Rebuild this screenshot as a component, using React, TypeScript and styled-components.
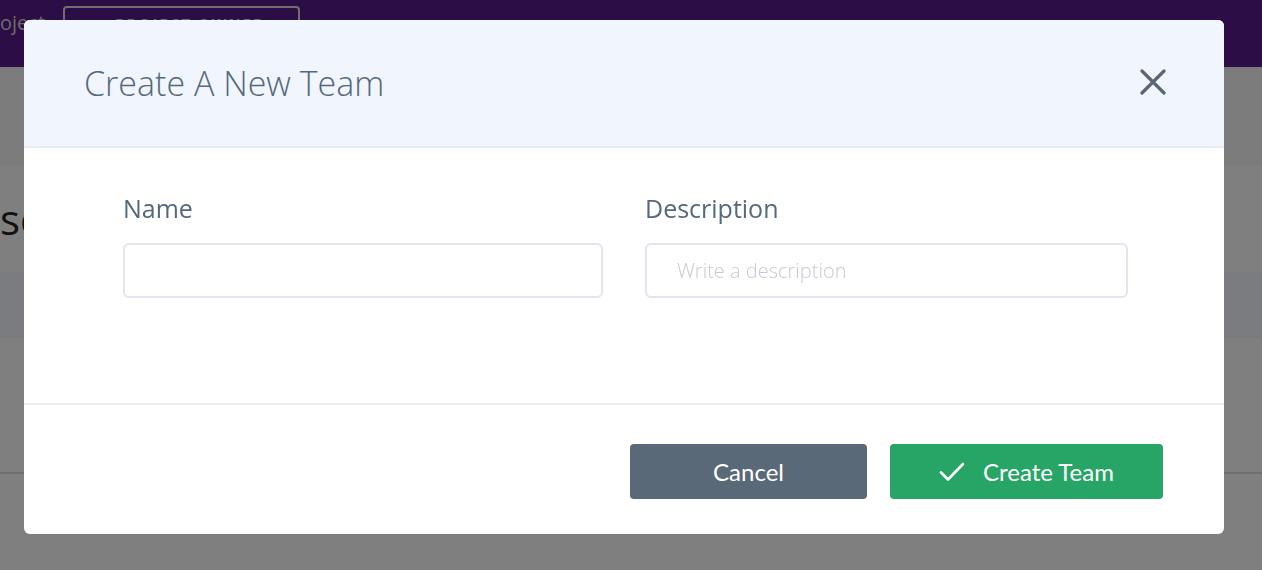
import styled, { createGlobalStyle } from "styled-components";

const GlobalStyle = createGlobalStyle`
  html, body {
    margin: 0;
    padding: 0;
    height: 100%;
    overflow: hidden;
    font-family: "Open Sans", "Liberation Sans", sans-serif;
  }
  #root {
    height: 100%;
  }
  * {
    box-sizing: border-box;
  }
`;

const CheckIcon = () => (
  <svg width="26" height="20" viewBox="0 0 26 20" fill="none">
    <path d="M2 10.5 L9 17.5 L24 2" stroke="#fff" strokeWidth="2.6" strokeLinecap="round" strokeLinejoin="round" />
  </svg>
);

const CloseIcon = () => (
  <svg width="26" height="26" viewBox="0 0 26 26" fill="none">
    <path d="M2 2 L24 24 M24 2 L2 24" stroke="#5a6674" strokeWidth="3.2" strokeLinecap="round" />
  </svg>
);

const App = () => {
  return (
    <>
      <GlobalStyle />
      <Page>
        <TopBar>
          <ProjectName>oject</ProjectName>
          <OwnerBadge>● PROJECT OWNER</OwnerBadge>
        </TopBar>
        <SubBar />
        <HeadingBand>
          <PageHeading>scope</PageHeading>
        </HeadingBand>
        <TableHeader />
        <TableRow />
      </Page>

      <Overlay>
        <Modal>
          <ModalHeader>
            <ModalTitle>Create A New Team</ModalTitle>
            <CloseButton aria-label="Close">
              <CloseIcon />
            </CloseButton>
          </ModalHeader>
          <ModalBody>
            <Field>
              <Label>Name</Label>
              <TextInput />
            </Field>
            <Field>
              <Label>Description</Label>
              <TextInput placeholder="Write a description" />
            </Field>
          </ModalBody>
          <ModalFooter>
            <Button variant="secondary">Cancel</Button>
            <Button variant="primary">
              <CheckIcon />
              Create Team
            </Button>
          </ModalFooter>
        </Modal>
      </Overlay>
    </>
  );
};

const Page = styled.div`
  height: 100%;
  background: #ffffff;
  display: flex;
  flex-direction: column;
`;

const TopBar = styled.div`
  height: 67px;
  background: #5a1a8c;
  display: flex;
  align-items: flex-start;
  padding-top: 6px;
  gap: 18px;
  overflow: hidden;
`;

const ProjectName = styled.span`
  font-size: 20px;
  color: #d8d8d8;
  line-height: 34px;
`;

const OwnerBadge = styled.span`
  width: 237px;
  height: 34px;
  border: 2px solid #e0e0e0;
  border-radius: 4px;
  color: #e0e0e0;
  font-weight: 700;
  font-size: 15px;
  letter-spacing: 2px;
  display: flex;
  align-items: center;
  justify-content: center;
`;

const SubBar = styled.div`
  height: 98px;
  background: #f6f6f6;
`;

const HeadingBand = styled.div`
  height: 107px;
  display: flex;
  align-items: center;
  overflow: hidden;
`;

const PageHeading = styled.h1`
  margin: 0;
  font-size: 42px;
  font-weight: 400;
  color: #222;
`;

const TableHeader = styled.div`
  height: 66px;
  background: #f4f6ff;
`;

const TableRow = styled.div`
  height: 136px;
  border-bottom: 2px solid #dedede;
`;

const Overlay = styled.div`
  position: fixed;
  inset: 0;
  background: rgba(0, 0, 0, 0.5);
  display: flex;
  justify-content: flex-start;
  align-items: flex-start;
  padding: 20px 0 0 24px;
`;

const Modal = styled.div`
  width: 1200px;
  background: #ffffff;
  border-radius: 6px;
  overflow: hidden;
  display: flex;
  flex-direction: column;
`;

const ModalHeader = styled.div`
  height: 128px;
  background: #f1f5fd;
  border-bottom: 2px solid #e8ebf0;
  display: flex;
  align-items: center;
  justify-content: space-between;
  padding: 0 58px 0 60px;
`;

const ModalTitle = styled.h2`
  margin: 0;
  font-family: "Open Sans", sans-serif;
  font-weight: 300;
  font-size: 34px;
  color: #55697b;
`;

const CloseButton = styled.button`
  background: none;
  border: none;
  padding: 0;
  cursor: pointer;
  display: flex;
  margin-top: -2px;
`;

const ModalBody = styled.div`
  height: 257px;
  border-bottom: 2px solid #ececec;
  padding: 44px 97px 0 99px;
  display: grid;
  grid-template-columns: 480px 483px;
  column-gap: 42px;
  align-content: start;
`;

const Field = styled.div`
  display: flex;
  flex-direction: column;
`;

const Label = styled.label`
  font-family: "Open Sans", sans-serif;
  font-size: 25px;
  color: #55697b;
  line-height: 33px;
  margin-bottom: 18px;
`;

const TextInput = styled.input`
  height: 55px;
  border: 2px solid #e1e6ee;
  border-radius: 6px;
  padding: 0 30px;
  font-family: "Open Sans", sans-serif;
  font-weight: 300;
  font-size: 20px;
  color: #55697b;
  outline: none;
  &::placeholder {
    color: #c6cad3;
  }
`;

const ModalFooter = styled.div`
  height: 129px;
  display: flex;
  justify-content: flex-end;
  align-items: flex-start;
  gap: 23px;
  padding: 39px 61px 0 0;
`;

const Button = styled.button<{ variant: "primary" | "secondary" }>`
  height: 55px;
  width: ${(p) => (p.variant === "primary" ? "273px" : "237px")};
  border: none;
  border-radius: 4px;
  background: ${(p) => (p.variant === "primary" ? "#27a567" : "#5a6978")};
  color: #ffffff;
  font-family: "Lato", "Open Sans", sans-serif;
  font-size: 24px;
  display: flex;
  align-items: center;
  justify-content: center;
  gap: 18px;
  cursor: pointer;
`;

export default App;
